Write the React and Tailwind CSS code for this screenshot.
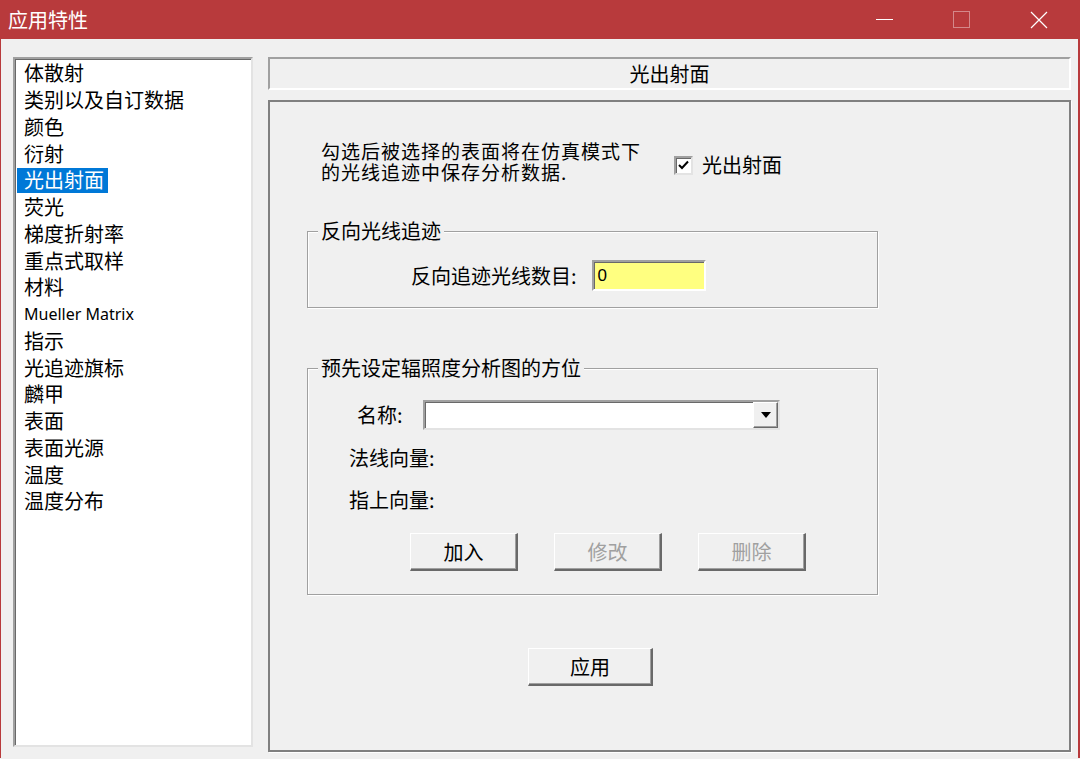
const font = { fontFamily: '"Noto Sans CJK SC", "Noto Sans", sans-serif' }

const items = [
  '体散射', '类别以及自订数据', '颜色', '衍射', '光出射面', '荧光', '梯度折射率', '重点式取样',
  '材料', 'Mueller Matrix', '指示', '光追迹旗标', '麟甲', '表面', '表面光源', '温度', '温度分布',
]

function WinButton({ children, disabled, className = '' }) {
  return (
    <button
      className={`bg-[#f0f0f0] border-t border-l border-t-white border-l-white border-b-2 border-r-2 border-b-[#696969] border-r-[#696969] shadow-[inset_-1px_-1px_0_#a0a0a0] text-[20px] leading-none ${disabled ? 'text-[#a0a0a0]' : 'text-black'} ${className}`}
    >
      {children}
    </button>
  )
}

function GroupBox({ legend, className = '', children }) {
  return (
    <div className={`relative border border-[#a0a0a0] shadow-[1px_1px_0_#ffffff,inset_1px_1px_0_#ffffff] ${className}`}>
      <span className="absolute -top-[13px] left-[10px] bg-[#f0f0f0] px-[3px] text-[20px] leading-[24px] text-black">{legend}</span>
      {children}
    </div>
  )
}

export default function App() {
  return (
    <div className="w-[1080px] h-[759px] bg-[#b83a3c] flex flex-col overflow-hidden" style={font}>
      {/* title bar */}
      <div className="h-[39px] flex items-center text-white shrink-0">
        <span className="pl-[8px] text-[20px] leading-none">应用特性</span>
        <div className="ml-auto mr-[3px] flex items-center h-full">
          <div className="w-[77px] h-full flex items-center justify-center">
            <div className="w-[17px] h-px bg-white" />
          </div>
          <div className="w-[77px] h-full flex items-center justify-center">
            <div className="w-[17px] h-[17px] border border-white/40" />
          </div>
          <div className="w-[77px] h-full flex items-center justify-center">
            <svg width="18" height="18" viewBox="0 0 18 18" stroke="white" strokeWidth="1.2">
              <path d="M1 1L17 17M17 1L1 17" />
            </svg>
          </div>
        </div>
      </div>

      {/* body */}
      <div className="flex-1 mx-px mr-[2px] bg-[#f0f0f0] flex pt-[18px] pl-[12px] gap-[15px]">
        {/* list */}
        <div className="w-[240px] h-[690px] bg-white border-2 border-t-[#a0a0a0] border-l-[#a0a0a0] border-b-[#e3e3e3] border-r-[#e3e3e3] shadow-[inset_1px_1px_0_#696969] pl-[2px] pt-[1px]">
          {items.map((t, i) => (
            <div key={t} className="h-[26.75px] flex items-center">
              <span
                className={`pl-[7px] pr-[4px] h-[25px] flex items-center ${i === 4 ? 'bg-[#0078d7] text-white' : 'text-black'} ${t === 'Mueller Matrix' ? 'text-[16px]' : 'text-[20px]'} leading-none`}
                style={t === 'Mueller Matrix' ? { fontFamily: '"Noto Sans", sans-serif' } : undefined}
              >
                {t}
              </span>
            </div>
          ))}
        </div>

        {/* right column */}
        <div className="w-[803px] flex flex-col gap-[10px]">
          <div className="h-[33px] border-2 border-t-[#a0a0a0] border-l-[#a0a0a0] border-b-white border-r-white flex items-center justify-center text-[20px] leading-none text-black">
            光出射面
          </div>

          <div className="h-[652px] border-2 border-[#808080] shadow-[1px_1px_0_#ffffff] flex flex-col">
            {/* description + checkbox */}
            <div className="flex items-center mt-[38px] ml-[51px]">
              <div className="text-[19px] tracking-[1px] leading-[21px] text-black w-[322px]">
                勾选后被选择的表面将在仿真模式下<br />的光线追迹中保存分析数据.
              </div>
              <div className="ml-[31px] mt-[8px] flex items-center gap-[9px]">
                <div className="w-[19px] h-[19px] bg-white border-2 border-t-[#a0a0a0] border-l-[#a0a0a0] border-b-[#e3e3e3] border-r-[#e3e3e3] shadow-[inset_1px_1px_0_#696969] flex items-center justify-center">
                  <svg width="11" height="10" viewBox="0 0 11 10">
                    <path d="M1 5L4 8L10 1.5" stroke="black" strokeWidth="2" fill="none" />
                  </svg>
                </div>
                <span className="text-[20px] leading-none text-black">光出射面</span>
              </div>
            </div>

            {/* group 1 */}
            <GroupBox legend="反向光线追迹" className="ml-[37px] mt-[49px] w-[571px] h-[77px]">
              <div className="flex items-center mt-[28px] ml-[103px]">
                <span className="text-[20px] leading-none text-black">反向追迹光线数目:</span>
                <div className="ml-[15px] w-[114px] h-[31px] bg-[#ffff80] border-2 border-t-[#a0a0a0] border-l-[#a0a0a0] border-b-white border-r-white shadow-[inset_1px_1px_0_#696969] flex items-center pl-[4px] text-[17px] text-black" style={{ fontFamily: '"Liberation Sans", sans-serif' }}>
                  0
                </div>
              </div>
            </GroupBox>

            {/* group 2 */}
            <GroupBox legend="预先设定辐照度分析图的方位" className="ml-[37px] mt-[60px] w-[571px] h-[227px]">
              <div className="flex items-center mt-[31px] ml-[49px]">
                <span className="text-[20px] leading-none text-black w-[66px]">名称:</span>
                <div className="w-[357px] h-[30px] bg-white border-2 border-t-[#a0a0a0] border-l-[#a0a0a0] border-b-[#e3e3e3] border-r-[#e3e3e3] shadow-[inset_1px_1px_0_#696969] flex justify-end">
                  <div className="w-[25px] h-full bg-[#f0f0f0] border-t border-l border-t-white border-l-white border-b border-r border-b-[#696969] border-r-[#696969] shadow-[inset_-1px_-1px_0_#a0a0a0] flex items-center justify-center">
                    <svg width="10" height="6" viewBox="0 0 10 6"><path d="M0 0H10L5 6Z" fill="black" /></svg>
                  </div>
                </div>
              </div>
              <div className="ml-[41px] mt-[18px] text-[20px] leading-none text-black">法线向量:</div>
              <div className="ml-[41px] mt-[22px] text-[20px] leading-none text-black">指上向量:</div>
              <div className="flex ml-[102px] mt-[23px] gap-[36px]">
                <WinButton className="w-[108px] h-[38px]">加入</WinButton>
                <WinButton disabled className="w-[108px] h-[38px]">修改</WinButton>
                <WinButton disabled className="w-[108px] h-[38px]">删除</WinButton>
              </div>
            </GroupBox>

            <div className="ml-[258px] mt-[53px]">
              <WinButton className="w-[125px] h-[38px]">应用</WinButton>
            </div>
          </div>
        </div>
      </div>
      <div className="h-[1px] bg-[#f0f0f0] shrink-0" />
    </div>
  )
}
